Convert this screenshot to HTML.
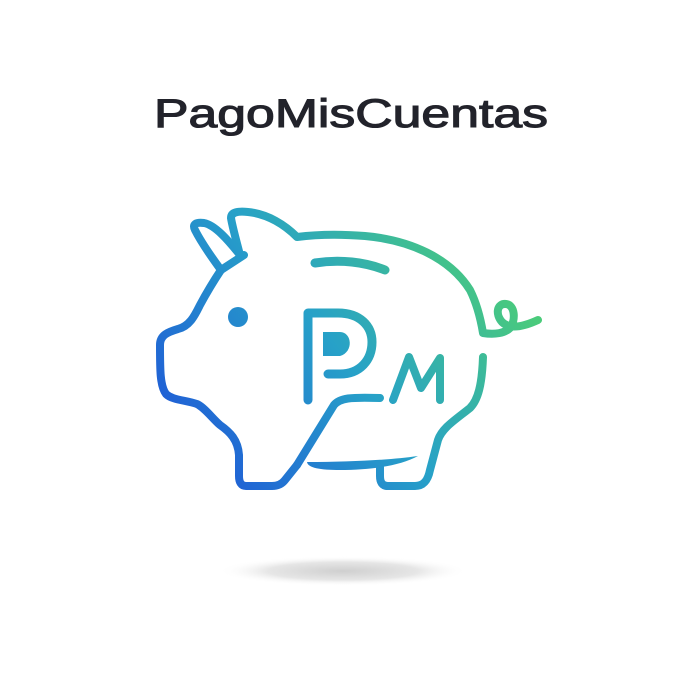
<!DOCTYPE html>
<html><head><meta charset="utf-8"><style>
html,body{margin:0;padding:0;background:#fff;width:683px;height:683px;overflow:hidden}
</style></head><body>
<svg width="683" height="683" viewBox="0 0 683 683" xmlns="http://www.w3.org/2000/svg">
<defs>
<linearGradient id="g" x1="170" y1="490" x2="520" y2="230" gradientUnits="userSpaceOnUse">
<stop offset="0" stop-color="#1e4fd9"/>
<stop offset="0.5" stop-color="#27a1c8"/>
<stop offset="1" stop-color="#52d46a"/>
</linearGradient>
<radialGradient id="sh" cx="0.5" cy="0.5" r="0.5">
<stop offset="0" stop-color="#cfcfcf"/>
<stop offset="0.6" stop-color="#e6e6e6"/>
<stop offset="1" stop-color="#ffffff" stop-opacity="0"/>
</radialGradient>
</defs>
<text x="351" y="127" text-anchor="middle" font-family="Liberation Sans, sans-serif" font-size="40" font-weight="normal" fill="#22232b" stroke="#22232b" stroke-width="1.1" textLength="394" lengthAdjust="spacingAndGlyphs">PagoMisCuentas</text>
<ellipse cx="343" cy="571" rx="125" ry="15" fill="url(#sh)"/>
<g fill="none" stroke="url(#g)" stroke-width="8" stroke-linecap="round" stroke-linejoin="round">
<path d="M483,357 C482,385 478,400 470,408 C455,420 442,428 438,440 L430,470 C428,480 424,486 415,486 L388,486 C382,486 380,482 380,476 L380,466"/>
<path d="M297,465 L285,480 C282,484 278,486 272,486 L246,486 C241,486 239,482 239,476 L239,455 C238,440 230,432 220,425 C212,418 205,408 197,404 C185,400 172,400 166,394 C160,386 160,370 160,345 C160,335 168,332 178,329 C190,326 195,315 200,305 C207,292 213,282 221,270"/>
<path d="M297,465 L334,405 C340,398 350,397 380,398"/>
<path d="M393,400 L409,357 L421,388 L440,358 L440,400"/>
<path d="M221,270 C210,255 200,240 195,230 C192,224 196,222 204,223 C215,225 228,240 240,255"/>
<path d="M221,270 L244,255"/>
<path d="M240,255 C236,240 232,225 231,218 C231,212 238,211 248,212 C268,214 285,225 297,237 C320,234 340,234 365,236 C410,240 450,258 470,290 C476,302 480,315 483,333 C495,335 505,333 510,328 C516,320 515,305 506,304 C497,303 495,314 502,322 C510,330 525,326 538,320"/>
<path d="M315,263 C340,259 365,262 385,270" stroke-width="9"/>
<path d="M308,400 L308,313 L338,313 C360,313 372,326 372,342 C372,360 360,374 340,374 L328,374" stroke-width="9"/>
</g>
<path d="M307,462 C350,462 390,460 418,456 C400,466 370,470 340,470 C320,470 308,468 307,462 Z" fill="url(#g)"/>
<path d="M323,332 L340,332 C352,332 354,352 340,356 L323,356 Z" fill="url(#g)"/>
<circle cx="238" cy="317" r="10" fill="url(#g)"/>
</svg>
</body></html>
